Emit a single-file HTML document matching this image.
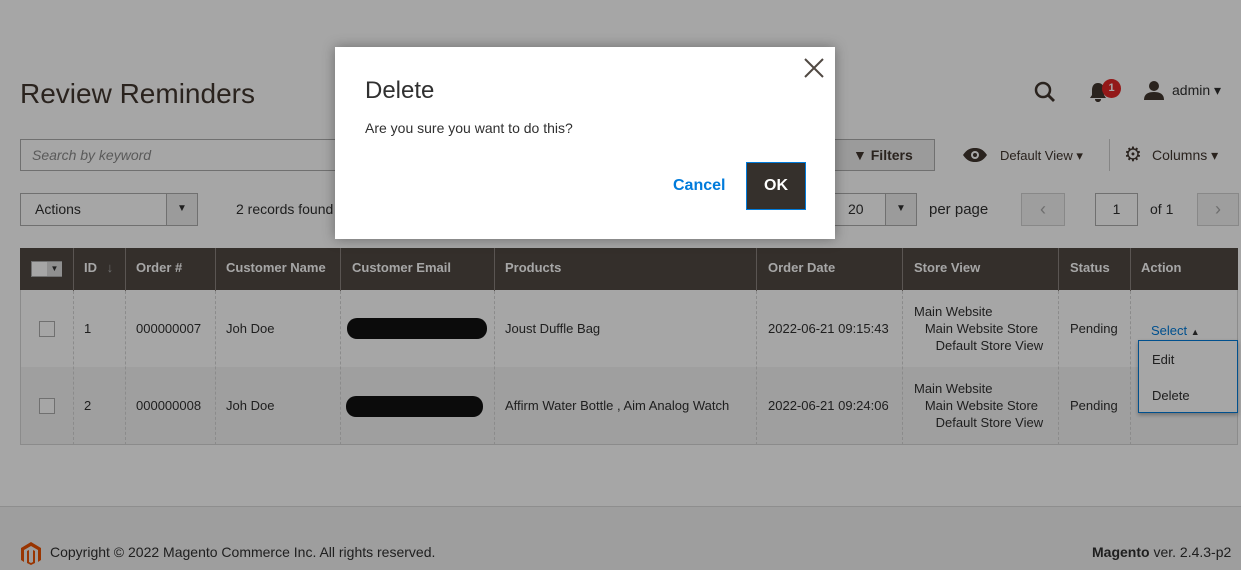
<!DOCTYPE html>
<html><head><style>
*{box-sizing:border-box;margin:0;padding:0}
body{width:1241px;height:570px;overflow:hidden;font-family:"Liberation Sans",sans-serif;background:#fff;position:relative;color:#303030;font-size:13px}
.a{position:absolute}
.hdr{background:#514943;color:#fff;font-weight:bold}
.cb{width:16px;height:16px;border:1px solid #adadad;background:#fff;position:absolute}
.vl{position:absolute;width:0;border-left:1px dashed #d6d6d6}
.btn{position:absolute;border:1px solid #adadad;background:#fff}
</style></head><body>
<div class="a" style="left:20px;top:78px;font-size:28px;color:#41362f">Review Reminders</div>
<svg class="a" style="left:1033px;top:80px" width="24" height="24" viewBox="0 0 24 24"><circle cx="10" cy="10" r="7" stroke="#41362f" stroke-width="2.5" fill="none"/><path d="M15 15l6 6" stroke="#41362f" stroke-width="2.8"/></svg>
<svg class="a" style="left:1089px;top:82px" width="18" height="20" viewBox="0 0 18 20"><path d="M9 1c-4 0-6 3-6 7v5l-2 3h16l-2-3V8c0-4-2-7-6-7z M6 17h6c0 2-1.5 3-3 3s-3-1-3-3z" fill="#41362f"/></svg>
<div class="a" style="left:1102px;top:79px;width:19px;height:19px;border-radius:50%;background:#e22626;color:#fff;font-size:11px;font-weight:bold;text-align:center;line-height:19px">1</div>
<svg class="a" style="left:1144px;top:80px" width="20" height="20" viewBox="0 0 20 20"><circle cx="10" cy="6" r="5" fill="#41362f"/><path d="M0 20c0-6 4-8 10-8s10 2 10 8z" fill="#41362f"/></svg>
<div class="a" style="left:1172px;top:82px;font-size:14px">admin ▾</div>
<div class="a" style="left:20px;top:139px;width:500px;height:32px;border:1px solid #adadad"></div>
<div class="a" style="left:32px;top:147px;font-style:italic;color:#8a8a8a;font-size:14px">Search by keyword</div>
<div class="btn" style="left:822px;top:139px;width:113px;height:32px;background:#eee;border-color:#adadad"><span class="a" style="left:30px;top:7px;font-weight:bold;font-size:14px;color:#41362f">▼ Filters</span></div>
<svg class="a" style="left:962px;top:147px" width="26" height="16" viewBox="0 0 26 16"><path d="M1 8C5 2 9 1 13 1s8 1 12 7c-4 6-8 7-12 7S5 14 1 8z" fill="#41362f"/><circle cx="13" cy="8" r="4" fill="#fff"/><circle cx="13" cy="8" r="2" fill="#41362f"/></svg>
<div class="a" style="left:1000px;top:148px;font-size:13px;color:#41362f">Default View ▾</div>
<div class="a" style="left:1109px;top:139px;height:32px;border-left:1px solid #ccc"></div>
<div class="a" style="left:1124px;top:145px;font-size:20px;color:#41362f;line-height:20px">⚙</div>
<div class="a" style="left:1152px;top:147px;font-size:14px;color:#41362f">Columns ▾</div>
<div class="a" style="left:20px;top:193px;width:178px;height:33px;border:1px solid #adadad"></div>
<div class="a" style="left:35px;top:201px;font-size:14px">Actions</div>
<div class="a" style="left:166px;top:193px;width:32px;height:33px;border:1px solid #adadad;background:#eee;text-align:center;line-height:30px;font-size:10px">▼</div>
<div class="a" style="left:236px;top:201px;font-size:14px">2 records found</div>
<div class="a" style="left:800px;top:193px;width:117px;height:33px;border:1px solid #adadad"></div>
<div class="a" style="left:848px;top:201px;font-size:14px">20</div>
<div class="a" style="left:885px;top:193px;width:32px;height:33px;border:1px solid #adadad;background:#eee;text-align:center;line-height:30px;font-size:10px">▼</div>
<div class="a" style="left:929px;top:201px;font-size:15px">per page</div>
<div class="a" style="left:1021px;top:193px;width:44px;height:33px;border:1px solid #d1d1d1;background:#f3f3f3;text-align:center;line-height:30px;color:#aaa;font-size:18px">‹</div>
<div class="a" style="left:1095px;top:193px;width:43px;height:33px;border:1px solid #adadad;text-align:center;line-height:31px;font-size:14px">1</div>
<div class="a" style="left:1150px;top:201px;font-size:14px">of 1</div>
<div class="a" style="left:1197px;top:193px;width:42px;height:33px;border:1px solid #d1d1d1;background:#f3f3f3;text-align:center;line-height:30px;color:#aaa;font-size:18px">›</div>

<div class="a hdr" style="left:20px;top:248px;width:1218px;height:43px"></div>
<div class="a" style="left:20px;top:290px;width:1218px;height:77px;background:#fff;border-left:1px solid #d6d6d6;border-right:1px solid #d6d6d6"></div>
<div class="a" style="left:20px;top:367px;width:1218px;height:78px;background:#f5f5f5;border:1px solid #d6d6d6;border-top:0"></div>
<div class="a" style="left:31px;top:261px;width:31px;height:16px;background:#fff;border:1px solid #adadad"><span class="a" style="left:15px;top:0;width:15px;height:14px;background:#ddd;font-size:8px;color:#333;text-align:center;line-height:14px">▼</span></div>
<div class="a" style="left:84px;top:260px;color:#fff;font-weight:bold">ID <span style="color:#aaa;font-weight:normal;margin-left:6px">↓</span></div>
<div class="a" style="left:136px;top:260px;color:#fff;font-weight:bold">Order #</div>
<div class="a" style="left:226px;top:260px;color:#fff;font-weight:bold">Customer Name</div>
<div class="a" style="left:352px;top:260px;color:#fff;font-weight:bold">Customer Email</div>
<div class="a" style="left:505px;top:260px;color:#fff;font-weight:bold">Products</div>
<div class="a" style="left:768px;top:260px;color:#fff;font-weight:bold">Order Date</div>
<div class="a" style="left:914px;top:260px;color:#fff;font-weight:bold">Store View</div>
<div class="a" style="left:1070px;top:260px;color:#fff;font-weight:bold">Status</div>
<div class="a" style="left:1141px;top:260px;color:#fff;font-weight:bold">Action</div>
<div class="a" style="left:73px;top:248px;height:43px;border-left:1px solid #8a837e"></div>
<div class="a" style="left:125px;top:248px;height:43px;border-left:1px solid #8a837e"></div>
<div class="a" style="left:215px;top:248px;height:43px;border-left:1px solid #8a837e"></div>
<div class="a" style="left:340px;top:248px;height:43px;border-left:1px solid #8a837e"></div>
<div class="a" style="left:494px;top:248px;height:43px;border-left:1px solid #8a837e"></div>
<div class="a" style="left:756px;top:248px;height:43px;border-left:1px solid #8a837e"></div>
<div class="a" style="left:902px;top:248px;height:43px;border-left:1px solid #8a837e"></div>
<div class="a" style="left:1058px;top:248px;height:43px;border-left:1px solid #8a837e"></div>
<div class="a" style="left:1130px;top:248px;height:43px;border-left:1px solid #8a837e"></div>
<div class="vl" style="left:73px;top:291px;height:154px"></div>
<div class="vl" style="left:125px;top:291px;height:154px"></div>
<div class="vl" style="left:215px;top:291px;height:154px"></div>
<div class="vl" style="left:340px;top:291px;height:154px"></div>
<div class="vl" style="left:494px;top:291px;height:154px"></div>
<div class="vl" style="left:756px;top:291px;height:154px"></div>
<div class="vl" style="left:902px;top:291px;height:154px"></div>
<div class="vl" style="left:1058px;top:291px;height:154px"></div>
<div class="vl" style="left:1130px;top:291px;height:154px"></div>

<div class="cb" style="left:39px;top:321px"></div>
<div class="a" style="left:84px;top:321px">1</div>
<div class="a" style="left:136px;top:321px">000000007</div>
<div class="a" style="left:226px;top:321px">Joh Doe</div>
<div class="a" style="left:347px;top:318px;width:140px;height:21px;background:#111;border-radius:10px"></div>
<div class="a" style="left:505px;top:321px">Joust Duffle Bag</div>
<div class="a" style="left:768px;top:321px">2022-06-21 09:15:43</div>
<div class="a" style="left:914px;top:303px;line-height:17px">Main Website<br>&nbsp;&nbsp;&nbsp;Main Website Store<br>&nbsp;&nbsp;&nbsp;&nbsp;&nbsp;&nbsp;Default Store View</div>
<div class="a" style="left:1070px;top:321px">Pending</div>
<div class="a" style="left:1151px;top:323px;color:#007bdb">Select <span style="font-size:9px;color:#333">▲</span></div>

<div class="cb" style="left:39px;top:398px"></div>
<div class="a" style="left:84px;top:398px">2</div>
<div class="a" style="left:136px;top:398px">000000008</div>
<div class="a" style="left:226px;top:398px">Joh Doe</div>
<div class="a" style="left:346px;top:396px;width:137px;height:21px;background:#111;border-radius:10px"></div>
<div class="a" style="left:505px;top:398px">Affirm Water Bottle , Aim Analog Watch</div>
<div class="a" style="left:768px;top:398px">2022-06-21 09:24:06</div>
<div class="a" style="left:914px;top:380px;line-height:17px">Main Website<br>&nbsp;&nbsp;&nbsp;Main Website Store<br>&nbsp;&nbsp;&nbsp;&nbsp;&nbsp;&nbsp;Default Store View</div>
<div class="a" style="left:1070px;top:398px">Pending</div>
<div class="a" style="left:1138px;top:340px;width:100px;height:73px;background:#fff;border:1px solid #007bdb;box-shadow:0 2px 4px rgba(0,0,0,.3)"><div class="a" style="left:13px;top:11px">Edit</div><div class="a" style="left:13px;top:47px">Delete</div></div>

<div class="a" style="left:0;top:506px;width:1241px;height:64px;background:#f3f3f3;border-top:1px solid #dadada"></div>
<svg class="a" style="left:21px;top:542px" width="20" height="23" viewBox="0 0 20 23"><path d="M10 0L0 6v12l3 2V8l7-4 7 4v12l3-2V6z M6 9v12l4 2 4-2V9l-2-1v12l-2 1-2-1V8z" fill="#eb5202"/></svg>
<div class="a" style="left:50px;top:544px;font-size:14px;color:#303030">Copyright © 2022 Magento Commerce Inc. All rights reserved.</div>
<div class="a" style="left:1092px;top:544px;font-size:14px"><b>Magento</b> ver. 2.4.3-p2</div>

<div class="a" style="left:0;top:0;width:1241px;height:570px;background:rgba(0,0,0,0.35)"></div>

<div class="a" style="left:335px;top:47px;width:500px;height:192px;background:#fff;box-shadow:0 0 12px rgba(0,0,0,.35)">
<div class="a" style="left:30px;top:30px;font-size:24px;color:#303030">Delete</div>
<div class="a" style="left:30px;top:73px;font-size:14px">Are you sure you want to do this?</div>
<svg class="a" style="left:468px;top:10px" width="22" height="22" viewBox="0 0 22 22"><path d="M2 2l18 18M20 2L2 20" stroke="#514943" stroke-width="2"/></svg>
<div class="a" style="left:338px;top:130px;font-size:16px;font-weight:bold;color:#007bdb">Cancel</div>
<div class="a" style="left:411px;top:115px;width:60px;height:48px;background:#35302c;border:1px solid #007bdb;color:#fff;font-weight:bold;font-size:16px;text-align:center;line-height:46px">OK</div>
</div>
</body></html>
